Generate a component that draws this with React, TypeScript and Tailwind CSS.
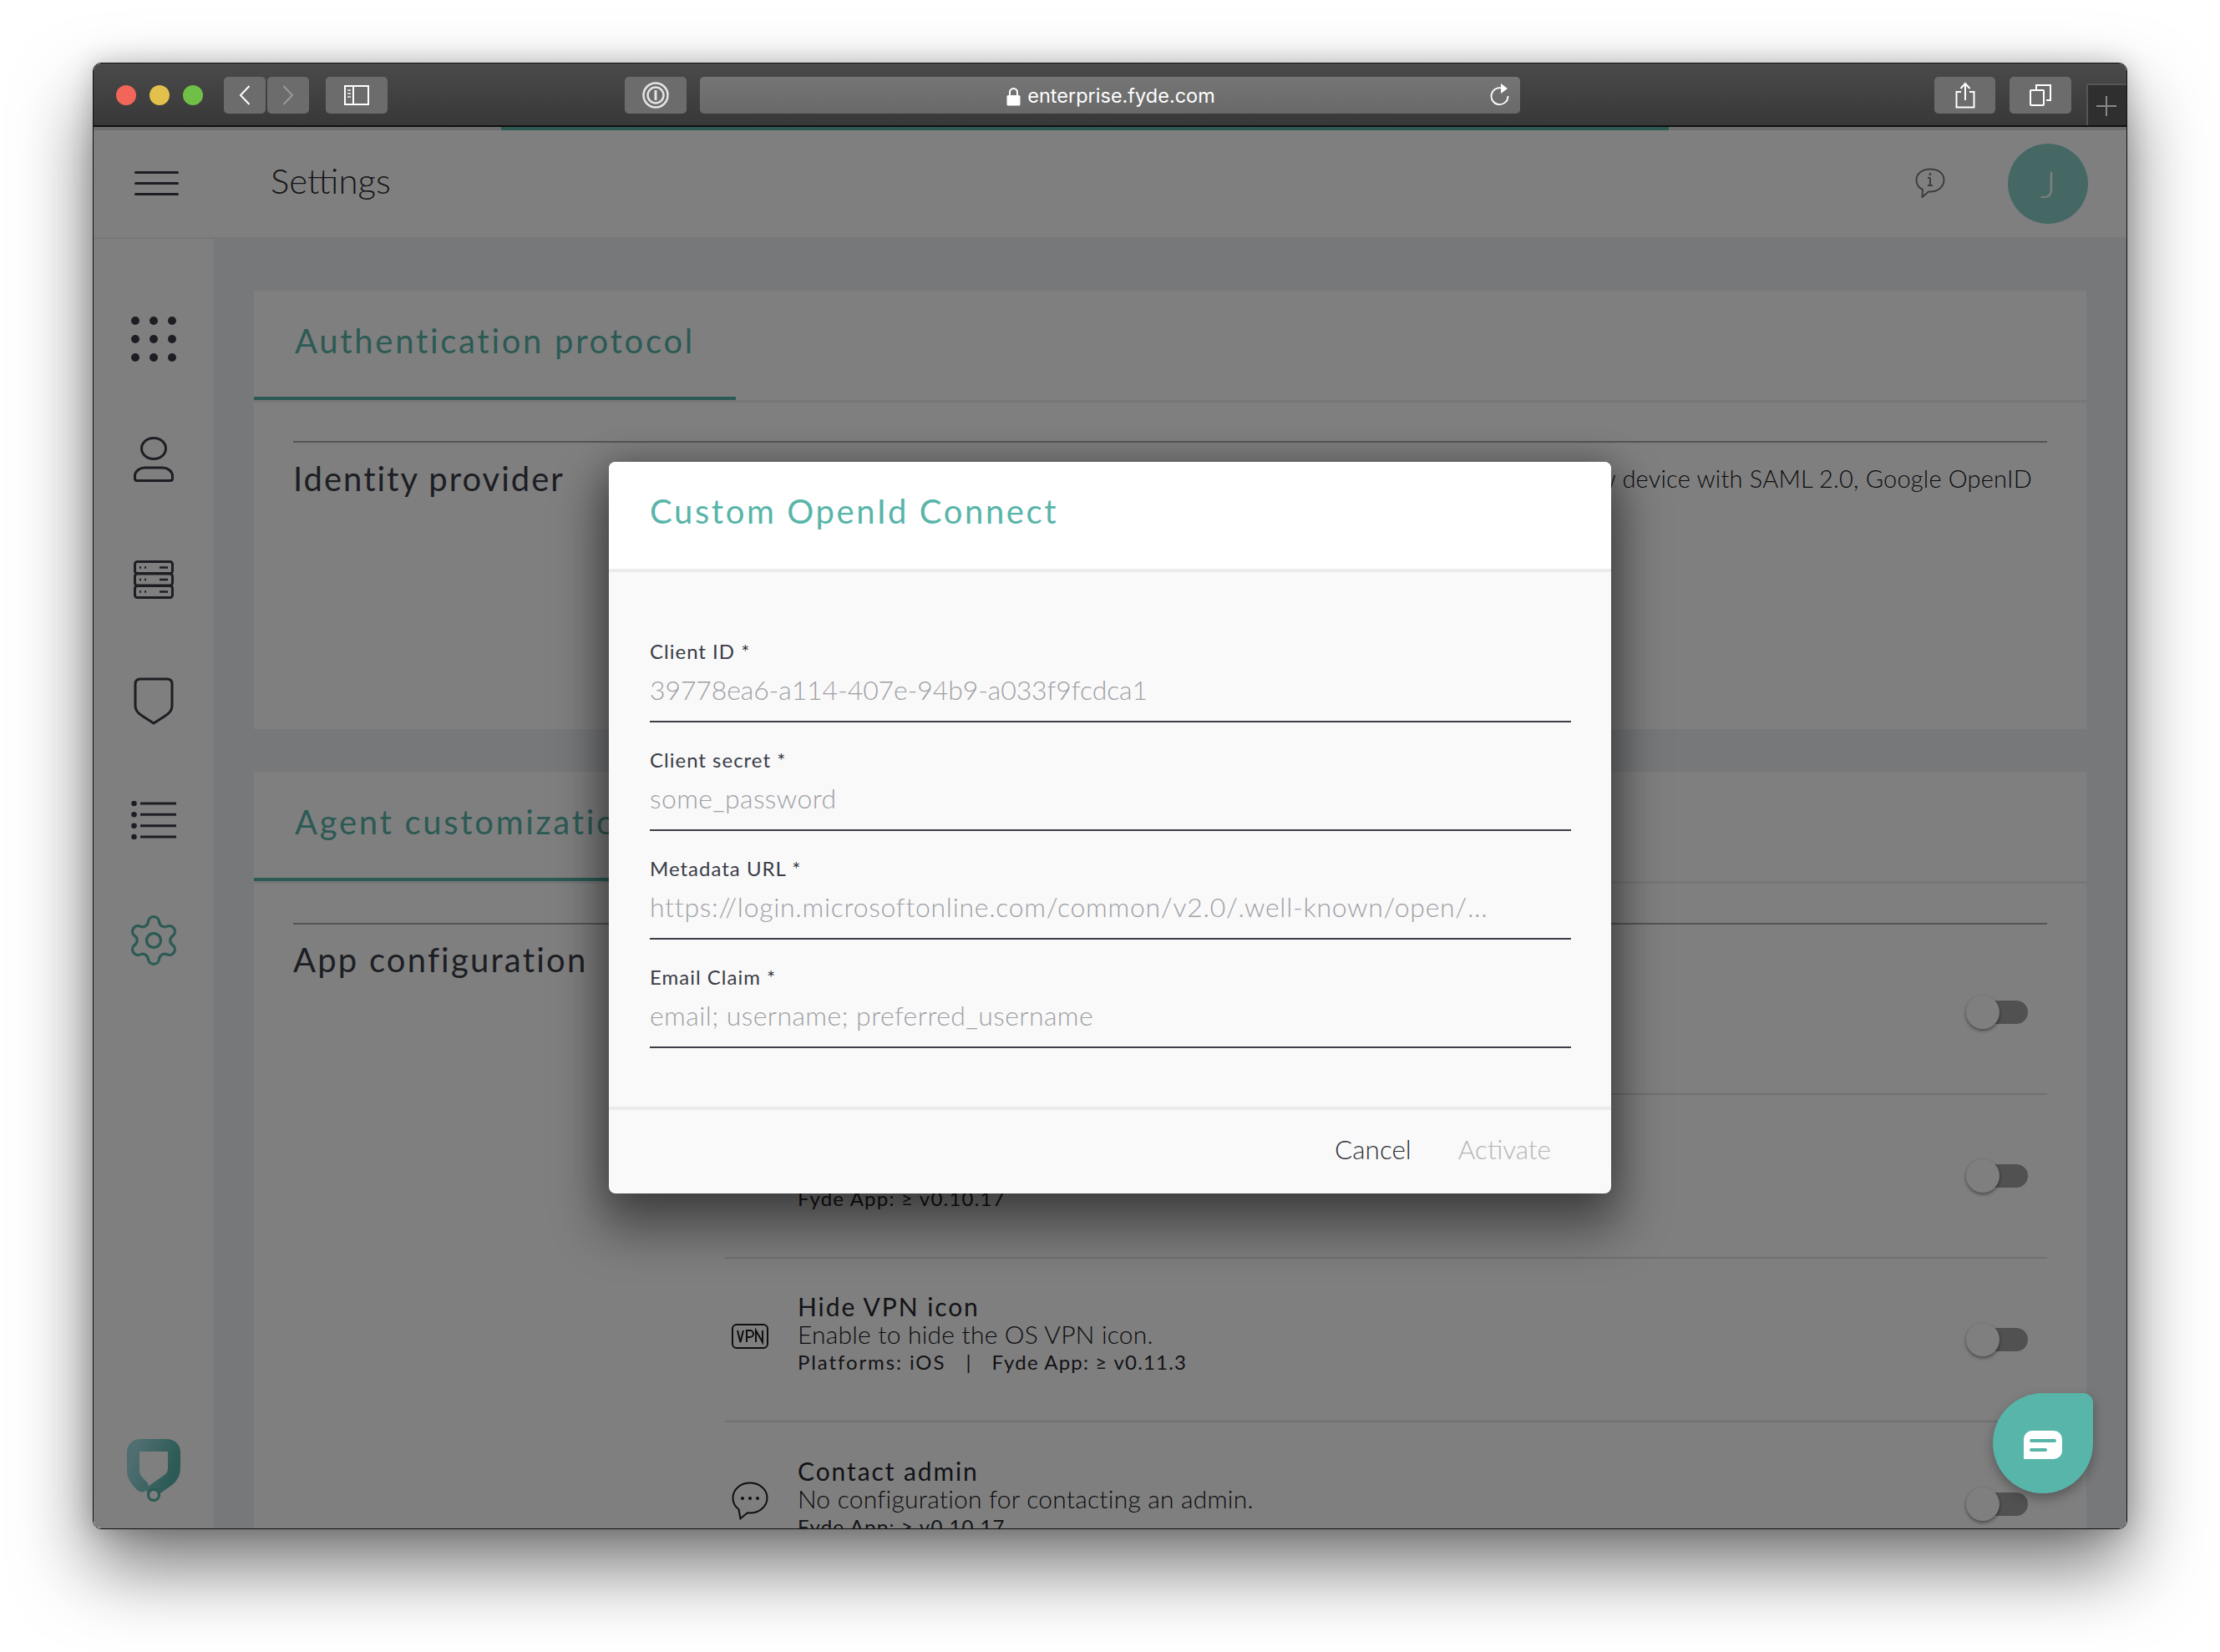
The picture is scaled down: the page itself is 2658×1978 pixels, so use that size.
import { Settings } from "lucide-react";

const font = { fontFamily: '"Lato", "Noto Sans", sans-serif' };

const Toggle = () => (
  <div className="relative ml-auto mr-[23px] h-[40px] w-[74px] shrink-0">
    <div className="absolute right-0 top-[6px] h-[28px] w-[56px] rounded-full bg-[#a3a3a3]" />
    <div className="absolute left-0 top-0 h-[40px] w-[40px] rounded-full bg-white shadow-[0_2px_4px_rgba(0,0,0,0.45)]" />
  </div>
);

const VpnIcon = () => (
  <svg width="44" height="30" viewBox="0 0 44 30" fill="none">
    <rect x="1" y="1" width="42" height="28" rx="5" stroke="#1d1e23" strokeWidth="2" />
    <path d="M7 8l3.5 14L14 8M18 22V8h4a4 4 0 010 8h-4M29 22V8l8 14V8" stroke="#1d1e23" strokeWidth="2" />
  </svg>
);

const BubbleIcon = () => (
  <svg width="44" height="46" viewBox="0 0 44 46" fill="none">
    <path
      d="M22 1.5C10.5 1.5 1.5 9.5 1.5 19.5c0 5.5 2.7 10.4 7 13.7l2 11 8.5-7c1 .1 2 .2 3 .2 11.5 0 20.5-8 20.5-18S33.5 1.5 22 1.5z"
      stroke="#1d1e23"
      strokeWidth="2"
    />
    <circle cx="13" cy="20" r="2" fill="#1d1e23" />
    <circle cx="22" cy="20" r="2" fill="#1d1e23" />
    <circle cx="31" cy="20" r="2" fill="#1d1e23" />
  </svg>
);

const Row = ({ icon, title, desc, meta, last }: any) => (
  <div className={`flex h-[196px] items-center pl-[8px] ${last ? "" : "border-b-2 border-[#e0e0e0]"}`}>
    <div className="flex w-[79px] shrink-0 items-center pb-[8px]">{icon}</div>
    <div className="mb-[14px] flex h-[99px] flex-col justify-end text-[#26272e]">
      {title && <div className="h-[33px] text-[30px] leading-[33px] tracking-[1.9px]">{title}</div>}
      {desc && <div className="h-[33px] text-[30px] font-light leading-[33px] tracking-[0.2px] text-[#15161a]">{desc}</div>}
      <div className="h-[33px] whitespace-pre text-[24px] leading-[33px] tracking-[1.2px]">{meta}</div>
    </div>
    <Toggle />
  </div>
);

const Field = ({ label, value, spacing }: any) => (
  <div className="h-[130px] w-[1103px]">
    <div className="flex h-[128px] flex-col justify-end border-b-2 border-[#3a3d47] pb-[18px]">
      <div className="text-[24px] leading-[30px] tracking-[1px] text-[#3a3d47]">{label} *</div>
      <div className={`mt-[12px] truncate text-[32px] font-light leading-[38px] text-[#9fa0a6] ${spacing}`}>{value}</div>
    </div>
  </div>
);

const TabCard = ({ label, height, children }: any) => (
  <section className={`bg-white ${height}`}>
    <div className="h-[134px] border-b-[3px] border-[#eeeeee]">
      <div className="h-[131px] w-[577px] border-b-4 border-[#58b5a9] pl-[49px] pt-[35px] text-[40px] leading-[50px] tracking-[2.7px] text-[#58b5a9]">
        {label}
      </div>
    </div>
    {children}
  </section>
);

const ToolbarButton = ({ className, children }: any) => (
  <div className={`flex h-[44px] items-center justify-center rounded-[5px] bg-[#6c6c6c] ${className}`}>{children}</div>
);

function TitleBar() {
  return (
    <div className="relative z-30 flex h-[76px] shrink-0 items-start border-b-2 border-[#111] bg-gradient-to-b from-[#4a4a4a] to-[#383838] pl-[27px] pt-[16px]">
      <div className="mt-[10px] flex gap-[16px]">
        <span className="h-[24px] w-[24px] rounded-full bg-[#f2665a]" />
        <span className="h-[24px] w-[24px] rounded-full bg-[#e3c04b]" />
        <span className="h-[24px] w-[24px] rounded-full bg-[#70bf46]" />
      </div>
      <ToolbarButton className="ml-[25px] w-[50px]">
        <svg width="14" height="24" viewBox="0 0 14 24" fill="none"><path d="M12.5 1L2 12l10.5 11" stroke="#fff" strokeWidth="2" /></svg>
      </ToolbarButton>
      <ToolbarButton className="ml-[2px] w-[50px]">
        <svg width="14" height="24" viewBox="0 0 14 24" fill="none"><path d="M1.5 1L12 12 1.5 23" stroke="#999" strokeWidth="2" /></svg>
      </ToolbarButton>
      <ToolbarButton className="ml-[20px] w-[74px]">
        <svg width="30" height="24" viewBox="0 0 30 24" fill="none">
          <rect x="1" y="1" width="28" height="22" stroke="#fff" strokeWidth="2" />
          <path d="M11 1v22" stroke="#fff" strokeWidth="2" />
          <path d="M4 6h4M4 10h4M4 14h4" stroke="#ccc" strokeWidth="2" />
        </svg>
      </ToolbarButton>
      <ToolbarButton className="ml-[284px] w-[74px]">
        <svg width="32" height="32" viewBox="0 0 32 32" fill="none">
          <circle cx="16" cy="16" r="14.5" stroke="#e4e4e4" strokeWidth="2.5" />
          <circle cx="16" cy="16" r="9.5" stroke="#e4e4e4" strokeWidth="2.5" />
          <path d="M16 10v12" stroke="#e4e4e4" strokeWidth="3" />
        </svg>
      </ToolbarButton>
      <ToolbarButton className="relative ml-[16px] w-[982px] bg-gradient-to-b from-[#757575] to-[#696969]">
        <div className="flex items-center gap-[8px] pl-[2px] pt-[2px]">
          <svg width="17" height="23" viewBox="0 0 17 23" fill="none">
            <path d="M4 10V6.5a4.5 4.5 0 019 0V10" stroke="#fff" strokeWidth="2" />
            <rect x="0.5" y="10" width="16" height="12.5" rx="1.5" fill="#fff" />
          </svg>
          <span className="text-[23.5px] leading-[30px] text-white" style={{ fontFamily: '"Inter", sans-serif' }}>enterprise.fyde.com</span>
        </div>
        <svg className="absolute right-[12px] top-[8px]" width="24" height="28" viewBox="0 0 24 28" fill="none">
          <path d="M14 5.5A10 10 0 1021.5 15" stroke="#fff" strokeWidth="1.8" />
          <path d="M13 0l8 6-8 6z" fill="#fff" />
        </svg>
      </ToolbarButton>
      <ToolbarButton className="ml-[496px] w-[73px]">
        <svg width="24" height="32" viewBox="0 0 24 32" fill="none">
          <path d="M7 12H1.5v18.500h21V12H17" stroke="#fff" strokeWidth="2" />
          <path d="M12 22V2M6.5 8L12 2l5.5 6" stroke="#fff" strokeWidth="2" />
        </svg>
      </ToolbarButton>
      <ToolbarButton className="ml-[17px] w-[74px]">
        <svg width="26" height="26" viewBox="0 0 26 26" fill="none">
          <rect x="1" y="7" width="16" height="18" rx="1" stroke="#fff" strokeWidth="2" />
          <path d="M8 6V1h17v18h-5" stroke="#fff" strokeWidth="2" />
        </svg>
      </ToolbarButton>
      <div className="absolute bottom-0 right-0 flex h-[50px] w-[48px] items-center justify-center border-l-2 border-t-2 border-[#555] bg-[#2f2f2f] pr-[3px] pt-[2px]">
        <svg width="24" height="24" viewBox="0 0 24 24" fill="none"><path d="M12 0v24M0 12h24" stroke="#888" strokeWidth="2" /></svg>
      </div>
    </div>
  );
}

function Sidebar() {
  const cell = "flex h-[144px] items-center justify-center";
  return (
    <aside className="flex w-[144px] shrink-0 flex-col items-center border-t-2 border-[#eeeeee] bg-white pt-[48px]">
      <div className={cell}>
        <svg width="54" height="54" viewBox="0 0 54 54" fill="#3a3d47">
          {[5, 27, 49].map((y) =>
            [5, 27, 49].map((x) => <circle key={`${x}-${y}`} cx={x} cy={y} r="5" />),
          )}
        </svg>
      </div>
      <div className={cell}>
        <svg width="48" height="54" viewBox="0 0 48 54" fill="none" stroke="#3a3d47" strokeWidth="3">
          <ellipse cx="24" cy="14" rx="14.5" ry="12.5" />
          <path d="M4 52.5c-1.5 0-2.5-1-2.5-2.5v-3c0-6 6-10 12-10h21c6 0 12 4 12 10v3c0 1.5-1 2.5-2.5 2.5z" />
        </svg>
      </div>
      <div className={cell}>
        <svg width="48" height="46" viewBox="0 0 48 46" fill="none" stroke="#3a3d47" strokeWidth="3">
          <rect x="1.5" y="1.5" width="45" height="14" rx="3" />
          <rect x="1.5" y="16" width="45" height="14" rx="3" />
          <rect x="1.5" y="30.5" width="45" height="14" rx="3" />
          <path d="M7 8.5h2M13 8.5h2M7 23h2M13 23h2M7 37.5h2M13 37.5h2M31 8.5h10M31 23h10M31 37.5h10" strokeWidth="2.5" />
        </svg>
      </div>
      <div className={cell}>
        <svg className="mt-[3px]" width="48" height="58" viewBox="0 0 48 58" fill="none" stroke="#3a3d47" strokeWidth="3">
          <path d="M8 2h32c4 0 6 2 6 6v26c0 6-3 9-8 12L24 55 10 46c-5-3-8-6-8-12V8c0-4 2-6 6-6z" strokeLinejoin="round" />
        </svg>
      </div>
      <div className={cell}>
        <svg width="54" height="46" viewBox="0 0 54 46" fill="none">
          {[3, 16.3, 29.7, 43].map((y) => (
            <g key={y}>
              <circle cx="3.5" cy={y} r="3.3" fill="#3a3d47" />
              <path d={`M11 ${y}h43`} stroke="#3a3d47" strokeWidth="3" />
            </g>
          ))}
        </svg>
      </div>
      <div className={cell}>
        <Settings size={68} strokeWidth={1.15} className="text-[#58b5a9]" />
      </div>
      <svg className="mb-[32px] mt-auto" width="64" height="75" viewBox="0 0 64 75" fill="none">
        <defs>
          <linearGradient id="logoGrad" x1="0" y1="0.2" x2="1" y2="0.6">
            <stop offset="0" stopColor="#9edde2" />
            <stop offset="1" stopColor="#58b5a9" />
          </linearGradient>
        </defs>
        <path d="M18 56C12 51 7.5 46 7.5 38V16c0-5 3.5-8.5 8.5-8.5h32c5 0 8.5 3.5 8.5 8.5v19c0 6-2 10-7 14L31 62" stroke="url(#logoGrad)" strokeWidth="15" strokeLinecap="round" />
        <circle cx="32" cy="67" r="8" fill="#58b5a9" />
        <circle cx="32" cy="67" r="5" fill="#fff" />
      </svg>
    </aside>
  );
}

function Dialog() {
  return (
    <div className="flex h-[876px] w-[1200px] flex-col overflow-hidden rounded-[8px] bg-[#f9f9f9] shadow-[0_34px_60px_10px_rgba(0,0,0,0.42),0_0_40px_rgba(0,0,0,0.25)]">
      <div className="h-[132px] shrink-0 border-b-4 border-[#ebebeb] bg-white pl-[49px] pt-[34px] text-[40px] leading-[50px] tracking-[2.6px] text-[#58b5a9]">
        Custom OpenId Connect
      </div>
      <div className="flex-1 pl-[49px] pt-[52px]">
        <Field label="Client ID" value="39778ea6-a114-407e-94b9-a033f9fcdca1" spacing="tracking-[-0.12px]" />
        <Field label="Client secret" value="some_password" spacing="tracking-[0.35px]" />
        <Field label="Metadata URL" value="https://login.microsoftonline.com/common/v2.0/.well-known/open/..." spacing="tracking-[0.7px]" />
        <Field label="Email Claim" value="email; username; preferred_username" spacing="tracking-[0.4px]" />
      </div>
      <div className="flex h-[104px] shrink-0 items-center justify-end gap-[56px] border-t-4 border-[#ebebeb] pb-[6px] pr-[72px] text-[31.5px] font-light leading-[36px]">
        <span className="text-[#2f3038]">Cancel</span>
        <span className="text-[#b5b5b5]">Activate</span>
      </div>
    </div>
  );
}

export default function App() {
  return (
    <div className="min-h-[1978px] bg-white pl-[111px] pt-[75px]" style={font}>
      <div className="relative flex h-[1756px] w-[2436px] flex-col overflow-hidden rounded-[10px] border border-[#111] shadow-[0_44px_90px_rgba(0,0,0,0.55),0_0_30px_rgba(0,0,0,0.2)]">
        <TitleBar />
        <div className="relative flex min-h-0 flex-1 flex-col bg-[#eff0f4]">
          <div className="h-[4px] shrink-0 bg-[#dcdcdc] pl-[488px]">
            <div className="h-[4px] w-[1398px] bg-[#58b5a9]" />
          </div>
          <header className="flex h-[128px] shrink-0 items-center bg-white pl-[49px] pr-[46px]">
            <div className="mb-[2px] flex w-[163px] flex-col gap-[10px]">
              <span className="h-[3px] w-[53px] rounded-full bg-[#3a3d47]" />
              <span className="h-[3px] w-[53px] rounded-full bg-[#3a3d47]" />
              <span className="h-[3px] w-[53px] rounded-full bg-[#3a3d47]" />
            </div>
            <h1 className="mb-[8px] text-[42px] font-light leading-[50px] text-[#2a2b33]">Settings</h1>
            <svg className="mb-[2px] ml-auto mr-[75px]" width="36" height="36" viewBox="0 0 36 36" fill="none">
              <path d="M18 1.5C8.5 1.5 1.5 7 1.5 14.5c0 5 3 9.3 7.5 11.5l-.5 9 7.5-6.6h2c9.5 0 16.5-6 16.5-13.900S27.5 1.5 18 1.5z" stroke="#7a7a7e" strokeWidth="2" />
              <path d="M18 12v9M15 21h6M15 12h3" stroke="#7a7a7e" strokeWidth="2" />
              <circle cx="18" cy="7.5" r="1.5" fill="#7a7a7e" />
            </svg>
            <div className="flex h-[96px] w-[96px] items-center justify-center rounded-full bg-[#8bd1cb] text-[44px] font-light text-white">J</div>
          </header>
          <div className="flex min-h-0 flex-1">
            <Sidebar />
            <main className="min-w-0 flex-1 overflow-hidden pl-[48px] pr-[48px] pt-[64px]">
              <TabCard label="Authentication protocol" height="h-[525px]">
                <div className="mx-[47px] mt-[46px] flex justify-between border-t-2 border-[#aaaaaa] pt-[19px] text-[#3a3d47]">
                  <h2 className="text-[40px] leading-[48px] tracking-[2px]">Identity provider</h2>
                  <p className="mr-[18px] mt-[6px] text-[29px] font-light leading-[36px] tracking-[0.2px] text-[#15161a]">new device with SAML 2.0, Google OpenID</p>
                </div>
              </TabCard>
              <div className="h-[51px]" />
              <TabCard label="Agent customization">
                <div className="mx-[47px] mt-[47px] flex border-t-2 border-[#aaaaaa] pt-[18px]">
                  <h2 className="w-[517px] shrink-0 text-[40px] leading-[48px] tracking-[2.2px] text-[#3a3d47]">App configuration</h2>
                  <div className="-mt-[18px] min-w-0 flex-1 pt-[8px]">
                    <Row />
                    <Row meta="Fyde App: ≥ v0.10.17" />
                    <Row
                      icon={<VpnIcon />}
                      title="Hide VPN icon"
                      desc="Enable to hide the OS VPN icon."
                      meta={
                        <span className="flex">
                          <span className="tracking-[1.9px]">Platforms: iOS</span>
                          <span className="mx-[24px]">|</span>
                          <span>Fyde App: ≥ v0.11.3</span>
                        </span>
                      }
                    />
                    <Row
                      icon={<BubbleIcon />}
                      title="Contact admin"
                      desc="No configuration for contacting an admin."
                      meta="Fyde App: ≥ v0.10.17"
                      last
                    />
                  </div>
                </div>
              </TabCard>
            </main>
          </div>
          <div className="absolute inset-0 flex items-center justify-center bg-black/50">
            <Dialog />
          </div>
          <div className="absolute bottom-[42px] right-[40px] flex h-[120px] w-[120px] items-center justify-center rounded-[60px] rounded-tr-[12px] bg-[#58b5a9] shadow-[0_6px_14px_rgba(0,0,0,0.3)]">
            <div className="mt-[4px] flex h-[34px] w-[46px] flex-col justify-center gap-[7px] rounded-[10px] rounded-bl-none bg-white pl-[7px]">
              <span className="h-[4px] w-[32px] rounded-full bg-[#58b5a9]" />
              <span className="h-[4px] w-[21px] rounded-full bg-[#58b5a9]" />
            </div>
          </div>
        </div>
      </div>
    </div>
  );
}
